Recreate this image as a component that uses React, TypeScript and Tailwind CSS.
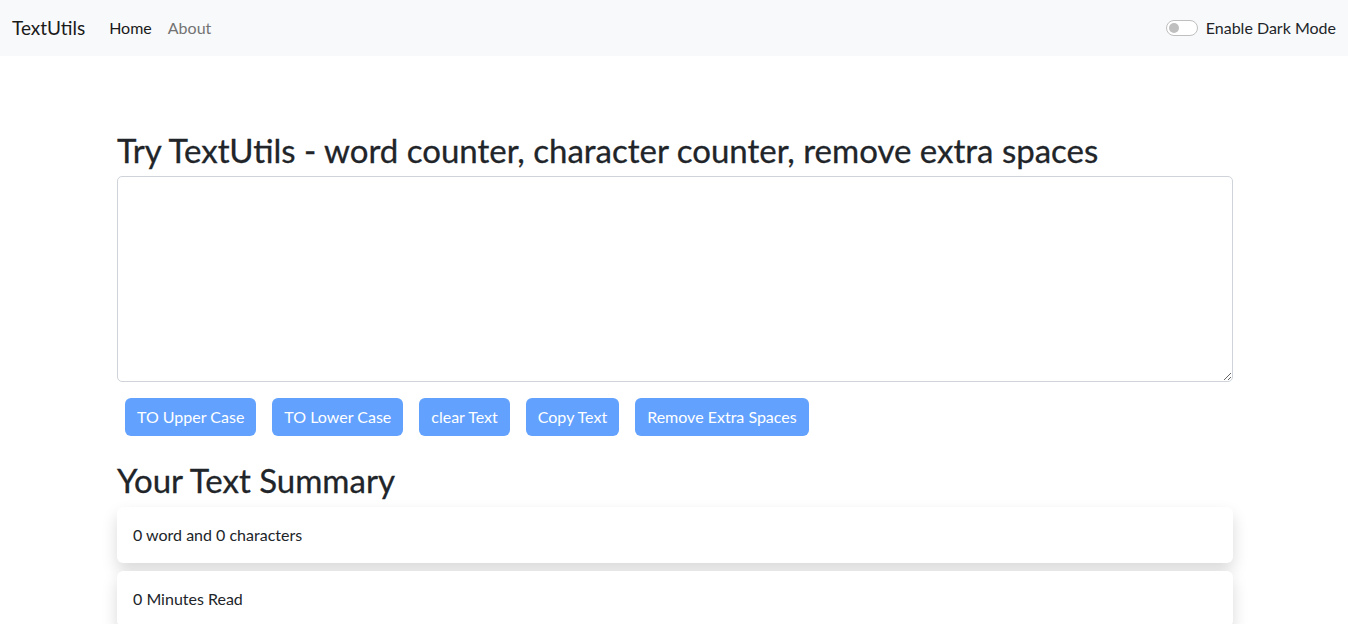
import React, { useState } from "react";

export default function App() {
  const [text, setText] = useState("");
  const words = text.split(/\s+/).filter((w) => w.length > 0).length;
  const disabled = text.length === 0;
  const btn =
    "mx-2 my-2 rounded-[6px] bg-[#62a1fe] px-3 py-[7px] text-[16px] leading-6 text-white";

  return (
    <div className="min-h-screen bg-white font-['Lato',sans-serif] text-[#212529]">
      <nav className="flex h-14 items-center justify-between bg-[#f8f9fa] px-3">
        <div className="flex items-center">
          <a className="mr-4 text-[19px] leading-[30px] text-[#1a1a1a]" href="#">
            TextUtils
          </a>
          <ul className="flex items-center">
            <li>
              <a className="block px-2 py-2 text-[16px] leading-6 text-[#1a1a1a]" href="#">
                Home
              </a>
            </li>
            <li>
              <a className="block px-2 py-2 text-[16px] leading-6 text-[#737373]" href="#">
                About
              </a>
            </li>
          </ul>
        </div>
        <label className="flex items-center gap-2 text-[16px] leading-6 text-[#212529]">
          <span className="relative inline-block h-4 w-8 rounded-full border border-[#bfbfbf] bg-white">
            <span className="absolute left-[2px] top-[2px] h-[10px] w-[10px] rounded-full bg-[#bfbfbf]" />
          </span>
          Enable Dark Mode
        </label>
      </nav>

      <div className="ml-[117px] w-[1116px]">
        <h1 className="mt-[75px] mb-[5px] text-[33px] font-normal leading-[1.2] [-webkit-text-stroke:0.3px_#212529]">
          Try TextUtils - word counter, character counter, remove extra spaces
        </h1>
        <textarea
          className="block h-[206px] w-full rounded-[5px] border border-[#ced4da] px-3 py-[6px] text-[16px] leading-6 outline-none"
          value={text}
          onChange={(e) => setText(e.target.value)}
        />
        <div className="mt-2 flex">
          <button className={btn} disabled={disabled} onClick={() => setText(text.toUpperCase())}>
            TO Upper Case
          </button>
          <button className={btn} disabled={disabled} onClick={() => setText(text.toLowerCase())}>
            TO Lower Case
          </button>
          <button className={btn} disabled={disabled} onClick={() => setText("")}>
            clear Text
          </button>
          <button className={btn} disabled={disabled}>
            Copy Text
          </button>
          <button
            className={btn}
            disabled={disabled}
            onClick={() => setText(text.split(/[ ]+/).join(" "))}
          >
            Remove Extra Spaces
          </button>
        </div>
        <h2 className="mt-[17px] mb-[7px] text-[33px] font-normal leading-[1.2] [-webkit-text-stroke:0.3px_#212529]">
          Your Text Summary
        </h2>
        <div className="flex flex-col gap-2">
          <div className="rounded-[6px] bg-white p-4 text-[16px] leading-6 shadow-[0_8px_16px_rgba(0,0,0,0.15)]">
            {words} word and {text.length} characters
          </div>
          <div className="rounded-[6px] bg-white p-4 text-[16px] leading-6 shadow-[0_8px_16px_rgba(0,0,0,0.15)]">
            {(0.008 * words).toFixed(0)} Minutes Read
          </div>
        </div>
      </div>
    </div>
  );
}
